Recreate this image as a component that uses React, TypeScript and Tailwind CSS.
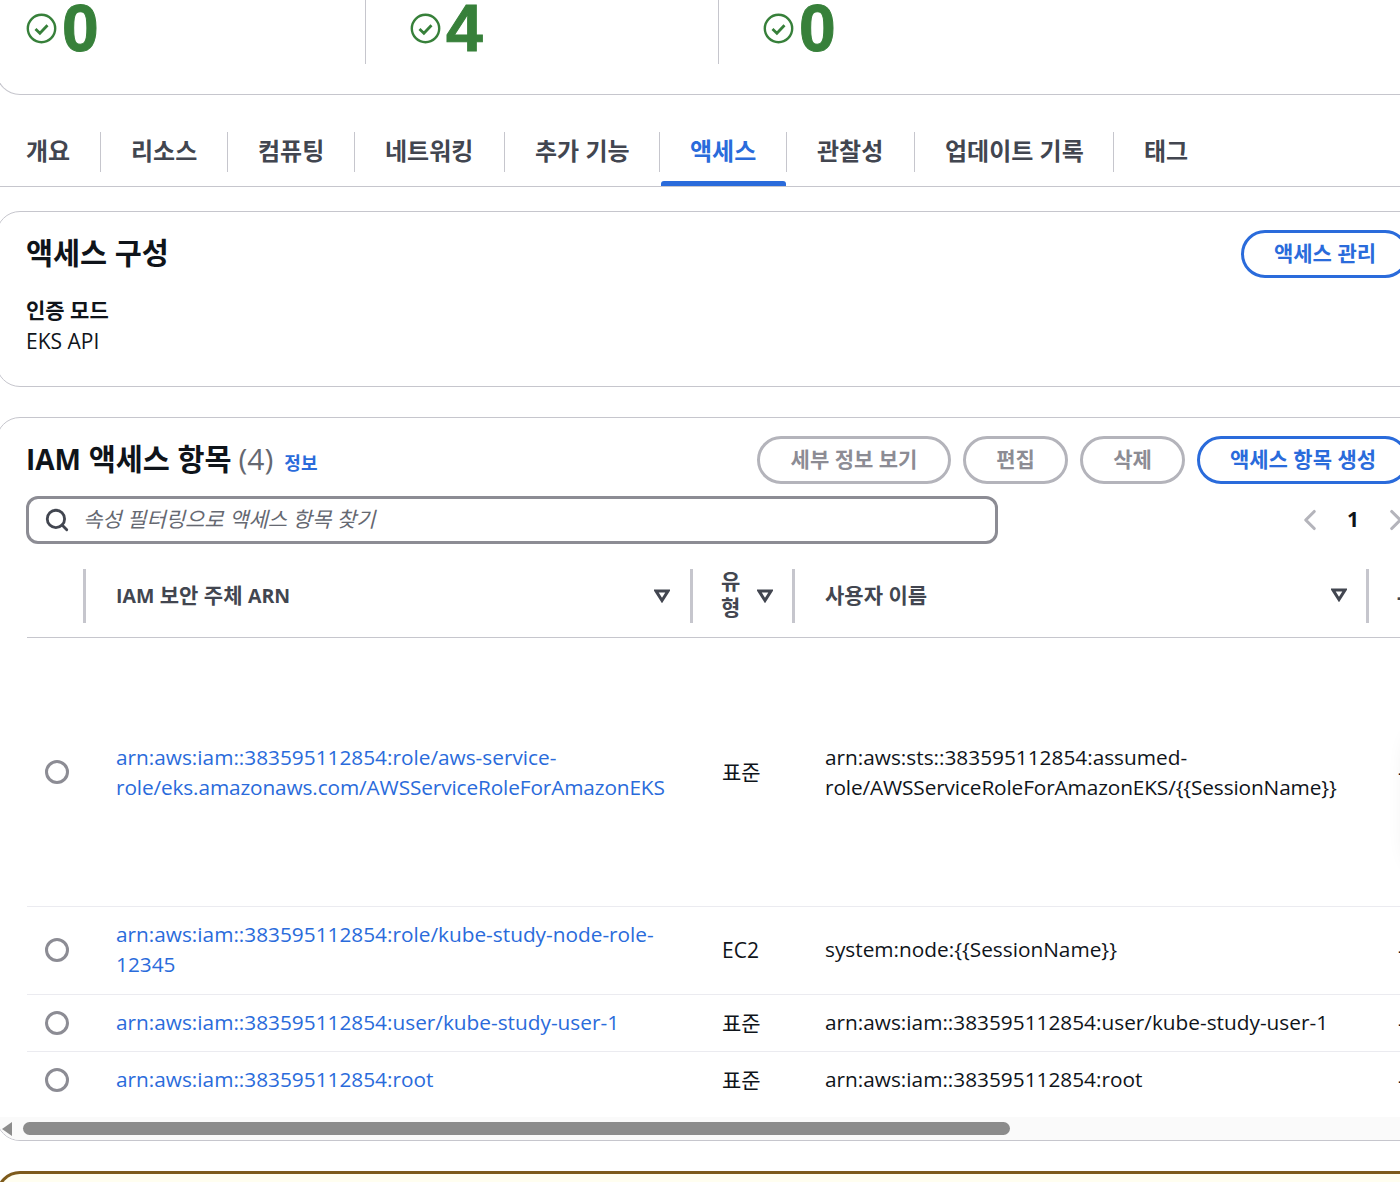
import React from "react";
import { Search, ChevronLeft, ChevronRight } from "lucide-react";

const FONT = "font-['Open_Sans','Noto_Sans_CJK_KR',sans-serif]";

const tabs = ["개요", "리소스", "컴퓨팅", "네트워킹", "추가 기능", "액세스", "관찰성", "업데이트 기록", "태그"];
const tabWidths = ["w-[100px]", "w-[127px]", "w-[127px]", "w-[150px]", "w-[155px]", "w-[127px]", "w-[128px]", "w-[199px]", "w-[120px]"];

const rows = [
    {
        h: "h-[269px]",
        arn: ["arn:aws:iam::383595112854:role/aws-service-", "role/eks.amazonaws.com/AWSServiceRoleForAmazonEKS"],
        type: "표준",
        user: ["arn:aws:sts::383595112854:assumed-", "role/AWSServiceRoleForAmazonEKS/{{SessionName}}"],
    },
    {
        h: "h-[88px]",
        arn: ["arn:aws:iam::383595112854:role/kube-study-node-role-", "12345"],
        type: "EC2",
        user: ["system:node:{{SessionName}}"],
    },
    {
        h: "h-[57px]",
        arn: ["arn:aws:iam::383595112854:user/kube-study-user-1"],
        type: "표준",
        user: ["arn:aws:iam::383595112854:user/kube-study-user-1"],
    },
    {
        h: "h-[57px]",
        arn: ["arn:aws:iam::383595112854:root"],
        type: "표준",
        user: ["arn:aws:iam::383595112854:root"],
    },
];

const Stat = ({ value, width, divider }: { value: string; width: string; divider?: boolean }) => (
    <div className={`${width} h-[64px] shrink-0 ${divider ? "border-l border-[#c6c6cd] pl-[44px]" : "pl-[29px]"}`}>
        <div className="flex items-center gap-[5px] h-[56px]">
            <svg width="31" height="31" viewBox="0 0 31 31" fill="none" className="shrink-0 mt-[1px]">
                <circle cx="15.5" cy="15.5" r="13.7" stroke="#37803a" strokeWidth="2.4" />
                <path d="M9.5 16l4.4 4.2 7.6-8" stroke="#37803a" strokeWidth="2.8" />
            </svg>
            <span className="font-['Liberation_Sans',sans-serif] text-[66px] leading-[56px] font-bold text-[#37803a] [-webkit-text-stroke:1px_#37803a]">{value}</span>
        </div>
    </div>
);

const SortIcon = () => (
    <svg width="16" height="14" viewBox="0 0 16 14" fill="none" className="shrink-0">
        <path d="M2 2h12L8 11.5z" stroke="#424650" strokeWidth="3" strokeLinejoin="miter" />
    </svg>
);

const OutlineButton = ({ label, width, active }: { label: string; width: string; active?: boolean }) => (
    <button
        className={`${width} h-[48px] pb-[2px] shrink-0 rounded-full border-[3px] bg-white text-[21px] font-bold ${
            active ? "border-[#2a6bdb] text-[#2a6bdb]" : "border-[#b4b4bb] text-[#8c8c94]"
        }`}
    >
        {label}
    </button>
);

const CellLines = ({ lines }: { lines: string[] }) => (
    <>
        {lines.map((line) => (
            <div key={line} className={line.includes("AWSService") ? "tracking-[-0.12px]" : ""}>
                {line}
            </div>
        ))}
    </>
);

export default function App() {
    return (
        <div className={`${FONT} relative w-[1400px] h-[1182px] overflow-hidden bg-white text-[21px] leading-[30px] text-[#0f141a]`}>
            <div className="w-[1444px] -ml-[4px]">
                {/* Top status card */}
                <div className="h-[95px] rounded-b-[24px] border-x border-b border-[#c6c6cd] flex items-start">
                    <Stat value="0" width="w-[368px]" />
                    <Stat value="4" width="w-[353px]" divider />
                    <Stat value="0" width="w-[353px]" divider />
                </div>

                {/* Tabs */}
                <div className="h-[92px] pt-[37px] border-b border-[#c6c6cd] flex items-start pl-[4px]">
                    {tabs.map((tab, idx) => (
                        <div key={tab} className={`${tabWidths[idx]} relative h-[40px] shrink-0 ${idx > 0 ? "border-l border-[#c6c6cd]" : ""}`}>
                            <div
                                className={`text-[24px] leading-[38px] font-bold whitespace-nowrap ${idx === 0 ? "pl-[26px]" : "pl-[30px]"} ${
                                    tab === "액세스" ? "text-[#2a6bdb]" : "text-[#424650]"
                                }`}
                            >
                                {tab}
                            </div>
                            {tab === "액세스" && <div className="absolute left-[1px] right-0 top-[49px] h-[5px] rounded-t-[3px] bg-[#2a6bdb]" />}
                        </div>
                    ))}
                </div>

                {/* Access config */}
                <div className="mt-[24px] h-[176px] rounded-[24px] border border-[#c6c6cd] pl-[29px] pr-[30px] pt-[21px]">
                    <div className="flex justify-between items-start">
                        <h2 className="text-[29.4px] leading-[40px] font-bold">액세스 구성</h2>
                        <div className="mt-[-3px]">
                            <OutlineButton label="액세스 관리" width="w-[168px]" active />
                        </div>
                    </div>
                    <div className="mt-[17px] font-bold leading-[30px]">인증 모드</div>
                    <div className="mt-[1px]">EKS API</div>
                </div>

                {/* IAM access entries */}
                <div className="mt-[30px] h-[724px] rounded-[24px] border border-[#c6c6cd] relative overflow-hidden">
                    <div className="pl-[29px] pr-[30px] pt-[18px] flex items-center justify-between">
                        <div className="flex items-baseline -mt-[2px]">
                            <h2 className="text-[29.4px] leading-[48px] font-bold">
                                <span className="text-[28px]">IAM</span> 액세스 항목
                            </h2>
                            <span className="ml-[7px] text-[30px] text-[#656871]">(4)</span>
                            <span className="ml-[11px] text-[18px] font-bold text-[#2a6bdb]">정보</span>
                        </div>
                        <div className="flex items-center gap-[12px]">
                            <OutlineButton label="세부 정보 보기" width="w-[194px]" />
                            <OutlineButton label="편집" width="w-[105px]" />
                            <OutlineButton label="삭제" width="w-[105px]" />
                            <OutlineButton label="액세스 항목 생성" width="w-[212px]" active />
                        </div>
                    </div>

                    <div className="mt-[12px] pl-[29px] flex items-center">
                        <div className="w-[972px] h-[48px] pb-[1px] rounded-[12px] border-[3px] border-[#8c8c94] flex items-center pl-[15px]">
                            <Search size={26} strokeWidth={2.6} className="text-[#424650] shrink-0" />
                            <span className="ml-[13px] -mt-[2px] italic text-[#656871]">속성 필터링으로 액세스 항목 찾기</span>
                        </div>
                        <div className="flex items-center ml-[295px] text-[#b4b4bb]">
                            <ChevronLeft size={34} strokeWidth={2.2} />
                            <span className="w-[52px] pb-[2px] text-center font-bold text-[#0f141a]">1</span>
                            <ChevronRight size={34} strokeWidth={2.2} />
                        </div>
                    </div>

                    {/* Table */}
                    <table className="mt-[25px] ml-[30px] w-[1500px] table-fixed border-collapse">
                        <colgroup>
                            <col className="w-[56px]" />
                            <col className="w-[607px]" />
                            <col className="w-[102px]" />
                            <col className="w-[574px]" />
                            <col className="w-[161px]" />
                        </colgroup>
                        <thead>
                            <tr className="h-[68px] border-b border-[#c6c6cd] text-[#424650]">
                                <th className="pb-[13px]" />
                                <th className="pb-[13px] font-bold text-left">
                                    <div className="h-[54px] pb-[1px] border-l-[3px] border-[#c6c6cd] pl-[30px] pr-[20px] flex items-center justify-between">
                                        <span>
                                            <span className="text-[19.5px]">IAM</span> 보안 주체 <span className="text-[19.5px]">ARN</span>
                                        </span>
                                        <SortIcon />
                                    </div>
                                </th>
                                <th className="pb-[13px] font-bold text-left">
                                    <div className="h-[54px] pb-[1px] border-l-[3px] border-[#c6c6cd] pl-[28px] pr-[19px] flex items-center justify-between">
                                        <span className="w-[22px] leading-[26px] -mt-[3px]">유형</span>
                                        <SortIcon />
                                    </div>
                                </th>
                                <th className="pb-[13px] font-bold text-left">
                                    <div className="h-[54px] pb-[2px] border-l-[3px] border-[#c6c6cd] pl-[30px] pr-[19px] flex items-center justify-between">
                                        사용자 이름
                                        <SortIcon />
                                    </div>
                                </th>
                                <th className="pb-[13px] font-bold text-left">
                                    <div className="h-[54px] border-l-[3px] border-[#c6c6cd] pl-[28px] flex items-center">-</div>
                                </th>
                            </tr>
                        </thead>
                        <tbody>
                            {rows.map((row, idx) => (
                                <tr key={idx} className={`${row.h} ${idx < rows.length - 1 ? "border-b border-[#ebebf0]" : ""}`}>
                                    <td className="pl-[18px]">
                                        <div className="w-[24px] h-[24px] rounded-full border-[3px] border-[#8c8c94]" />
                                    </td>
                                    <td className={`pl-[33px] text-[20.8px] text-[#2a6bdb] whitespace-nowrap ${idx > 0 ? "pb-[2px]" : ""}`}>
                                        <CellLines lines={row.arn} />
                                    </td>
                                    <td className="pl-[32px]">{row.type}</td>
                                    <td className={`pl-[33px] text-[20.8px] whitespace-nowrap ${idx > 0 ? "pb-[2px]" : ""}`}>
                                        <CellLines lines={row.user} />
                                    </td>
                                    <td className="pl-[32px]">-</td>
                                </tr>
                            ))}
                        </tbody>
                    </table>

                    {/* Horizontal scrollbar */}
                    <div className="absolute left-0 right-0 bottom-0 h-[23px] bg-[#fafafa] flex items-center">
                        <svg width="11" height="14" viewBox="0 0 11 14" className="ml-[5px] shrink-0">
                            <path d="M0 7l10-7v14z" fill="#8c8c8c" />
                        </svg>
                        <div className="ml-[10px] w-[987px] h-[13px] rounded-full bg-[#8c8c8c]" />
                    </div>
                </div>

                {/* Warning card */}
                <div className="mt-[30px] h-[40px] rounded-t-[24px] border-x-[3px] border-t-[3px] border-[#7d5a1a] bg-[#fffef0]" />
            </div>

            {/* Edge of the floating panel, mostly off screen */}
            <div className="absolute left-[1414px] top-[735px] w-[40px] h-[130px] rounded-full bg-white shadow-[0_0_24px_rgba(0,0,0,0.2)]" />
        </div>
    );
}
